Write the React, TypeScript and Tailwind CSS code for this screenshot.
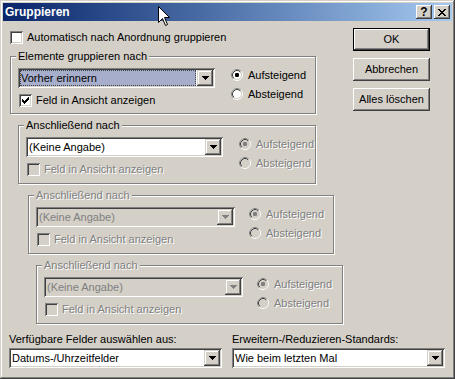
import React from "react";

const ff = "font-['Liberation_Sans',Arial,sans-serif]";
const raised =
  "shadow-[inset_-1px_-1px_0_#404040,inset_1px_1px_0_#ffffff,inset_-2px_-2px_0_#808080,inset_2px_2px_0_#d4d0c8]";
const comboBtn =
  "shadow-[inset_-1px_-1px_0_#404040,inset_1px_1px_0_#d4d0c8,inset_-2px_-2px_0_#808080,inset_2px_2px_0_#ffffff]";
const sunken =
  "shadow-[inset_1px_1px_0_#808080,inset_-1px_-1px_0_#ffffff,inset_2px_2px_0_#404040,inset_-2px_-2px_0_#d4d0c8]";
const dim = "text-[#808080] [text-shadow:1px_1px_0_#ffffff]";

function Arrow({ disabled }: { disabled?: boolean }) {
  const c = disabled ? "#808080" : "#000000";
  return (
    <svg width="7" height="4" viewBox="0 0 7 4" shapeRendering="crispEdges">
      <rect x="0" y="0" width="7" height="1" fill={c} />
      <rect x="1" y="1" width="5" height="1" fill={c} />
      <rect x="2" y="2" width="3" height="1" fill={c} />
      <rect x="3" y="3" width="1" height="1" fill={c} />
    </svg>
  );
}

function Combo({
  value,
  className,
  disabled,
  selected,
}: {
  value: string;
  className: string;
  disabled?: boolean;
  selected?: boolean;
}) {
  return (
    <div
      className={`flex h-[20px] shrink-0 p-[2px] ${sunken} ${disabled ? "bg-[#d4d0c8]" : "bg-white"} ${className}`}
    >
      <div
        className={`mr-[1px] flex min-w-0 flex-1 items-center whitespace-nowrap pl-[1px] ${
          selected ? "bg-[#a6aecb] outline-1 outline-dotted outline-[#404040] -outline-offset-1" : ""
        } ${disabled ? "text-[#808080]" : "text-black"}`}
      >
        {value}
      </div>
      <div className={`flex w-[16px] items-center justify-center bg-[#d4d0c8] ${comboBtn}`}>
        <Arrow disabled={disabled} />
      </div>
    </div>
  );
}

function Check({ checked, disabled }: { checked?: boolean; disabled?: boolean }) {
  return (
    <div
      className={`flex h-[13px] w-[13px] shrink-0 items-center justify-center ${sunken} ${
        disabled ? "bg-[#d4d0c8]" : "bg-white"
      }`}
    >
      {checked && (
        <svg width="7" height="7" viewBox="0 0 7 7" shapeRendering="crispEdges">
          <rect x="6" y="0" width="1" height="1" />
          <rect x="5" y="1" width="2" height="1" />
          <rect x="0" y="2" width="1" height="1" />
          <rect x="4" y="2" width="3" height="1" />
          <rect x="0" y="3" width="2" height="1" />
          <rect x="3" y="3" width="3" height="1" />
          <rect x="0" y="4" width="5" height="1" />
          <rect x="1" y="5" width="3" height="1" />
          <rect x="2" y="6" width="1" height="1" />
        </svg>
      )}
    </div>
  );
}

function Radio({ label, checked, disabled }: { label: string; checked?: boolean; disabled?: boolean }) {
  return (
    <div className="flex h-[12px] items-center gap-[5px]">
      <svg width="12" height="12" viewBox="0 0 12 12" className="shrink-0">
        <circle cx="6" cy="6" r="4.5" fill={disabled ? "#d4d0c8" : "#ffffff"} />
        <circle cx="6" cy="6" r="5.5" fill="none" stroke="#ffffff" />
        <path d="M2.11 9.89 A5.5 5.5 0 0 1 9.89 2.11" fill="none" stroke="#808080" />
        <circle cx="6" cy="6" r="4.5" fill="none" stroke="#d4d0c8" />
        <path d="M2.82 9.18 A4.5 4.5 0 0 1 9.18 2.82" fill="none" stroke="#404040" />
        {checked && <rect x="4" y="4" width="4" height="4" rx="1.2" fill={disabled ? "#808080" : "#000000"} />}
      </svg>
      <span className={disabled ? dim : ""}>{label}</span>
    </div>
  );
}

type GroupProps = {
  title: string;
  value: string;
  className: string;
  comboClass: string;
  legendDim?: boolean;
  comboDim?: boolean;
  selected?: boolean;
  checked?: boolean;
  optsDim?: boolean;
};

function Group(p: GroupProps) {
  return (
    <fieldset
      className={`min-w-0 border border-[#808080] shadow-[inset_1px_1px_0_#ffffff,1px_1px_0_#ffffff] ${p.className}`}
    >
      <legend className={`ml-[5px] bg-[#d4d0c8] px-[2px] leading-[13px] ${p.legendDim ? dim : ""}`}>
        {p.title}
      </legend>
      <div className="flex">
        <div className="flex w-[220px] shrink-0 flex-col pl-[7px] pt-[5px]">
          <Combo value={p.value} className={p.comboClass} disabled={p.comboDim} selected={p.selected} />
          <div className="ml-[1px] mt-[6px] flex items-center gap-[4px]">
            <Check checked={p.checked} disabled={p.optsDim} />
            <span className={p.optsDim ? dim : ""}>Feld in Ansicht anzeigen</span>
          </div>
        </div>
        <div className="flex flex-col gap-[7px] pt-[6px]">
          <Radio label="Aufsteigend" checked disabled={p.optsDim} />
          <Radio label="Absteigend" disabled={p.optsDim} />
        </div>
      </div>
    </fieldset>
  );
}

function Button({ label, isDefault }: { label: string; isDefault?: boolean }) {
  return (
    <div
      className={`flex h-[23px] w-[77px] items-center justify-center bg-[#d4d0c8] ${raised} ${
        isDefault ? "border border-black" : ""
      }`}
    >
      {label}
    </div>
  );
}

export default function App() {
  return (
    <div
      className={`relative flex h-[379px] w-[455px] flex-col overflow-hidden bg-[#d4d0c8] p-[3px] text-[11px] leading-[13px] text-black ${ff} shadow-[inset_-1px_-1px_0_#404040,inset_1px_1px_0_#d4d0c8,inset_-2px_-2px_0_#808080,inset_2px_2px_0_#ffffff]`}
    >
      {/* Title bar */}
      <div className="flex h-[18px] shrink-0 items-center justify-between bg-linear-to-r from-[#0a246a] to-[#a6caf0] pl-[2px] pr-[2px]">
        <span className="text-[12px] font-bold text-white">Gruppieren</span>
        <div className="flex gap-[2px]">
          <div className={`flex h-[14px] w-[16px] items-center justify-center bg-[#d4d0c8] text-[12px] font-bold ${raised}`}>?</div>
          <div className={`flex h-[14px] w-[16px] items-center justify-center bg-[#d4d0c8] ${raised}`}>
            <svg width="8" height="7" viewBox="0 0 8 7" shapeRendering="crispEdges">
              <path d="M0 0h2v1h1v1h2v-1h1v-1h2v1h-1v1h-1v1h-1v1h1v1h1v1h1v1h-2v-1h-1v-1h-2v1h-1v1h-2v-1h1v-1h1v-1h1v-1h-1v-1h-1v-1h-1z" />
            </svg>
          </div>
        </div>
      </div>

      {/* Body */}
      <div className="flex flex-col px-[6px]">
        <div className="flex">
          <div className="flex w-[344px] shrink-0 flex-col pt-[10px]">
            <div className="ml-[1px] flex items-center gap-[4px]">
              <Check />
              <span>Automatisch nach Anordnung gruppieren</span>
            </div>
            <Group
              title="Elemente gruppieren nach"
              value="Vorher erinnern"
              className="ml-[1px] mt-[6px] h-[64px] w-[306px]"
              comboClass="w-[197px]"
              selected
              checked
            />
            <Group
              title="Anschließend nach"
              value="(Keine Angabe)"
              className="ml-[9px] mt-[5px] h-[65px] w-[298px]"
              comboClass="w-[197px]"
              optsDim
            />
            <Group
              title="Anschließend nach"
              value="(Keine Angabe)"
              className="ml-[19px] mt-[5px] h-[65px] w-[306px]"
              comboClass="w-[199px]"
              legendDim
              comboDim
              optsDim
            />
            <Group
              title="Anschließend nach"
              value="(Keine Angabe)"
              className="ml-[27px] mt-[5px] h-[65px] w-[307px]"
              comboClass="w-[199px]"
              legendDim
              comboDim
              optsDim
            />
          </div>
          <div className="flex flex-col gap-[7px] pt-[7px]">
            <Button label="OK" isDefault />
            <Button label="Abbrechen" />
            <Button label="Alles löschen" />
          </div>
        </div>

        {/* Bottom selectors */}
        <div className="mt-[9px] flex gap-[10px]">
          <div className="flex flex-col gap-[2px]">
            <span>Verfügbare Felder auswählen aus:</span>
            <Combo value="Datums-/Uhrzeitfelder" className="w-[213px]" />
          </div>
          <div className="flex flex-col gap-[2px]">
            <span>Erweitern-/Reduzieren-Standards:</span>
            <Combo value="Wie beim letzten Mal" className="w-[213px]" />
          </div>
        </div>
      </div>

      {/* Mouse pointer */}
      <svg width="13" height="21" viewBox="0 0 13 21" className="absolute left-[158px] top-[6px]">
        <path d="M0.5 0.5 L0.5 16.5 L4.5 12.5 L7.5 19.5 L9.5 18.5 L6.5 11.5 L11.5 11.5 Z" fill="#ffffff" stroke="#000000" />
      </svg>
    </div>
  );
}
